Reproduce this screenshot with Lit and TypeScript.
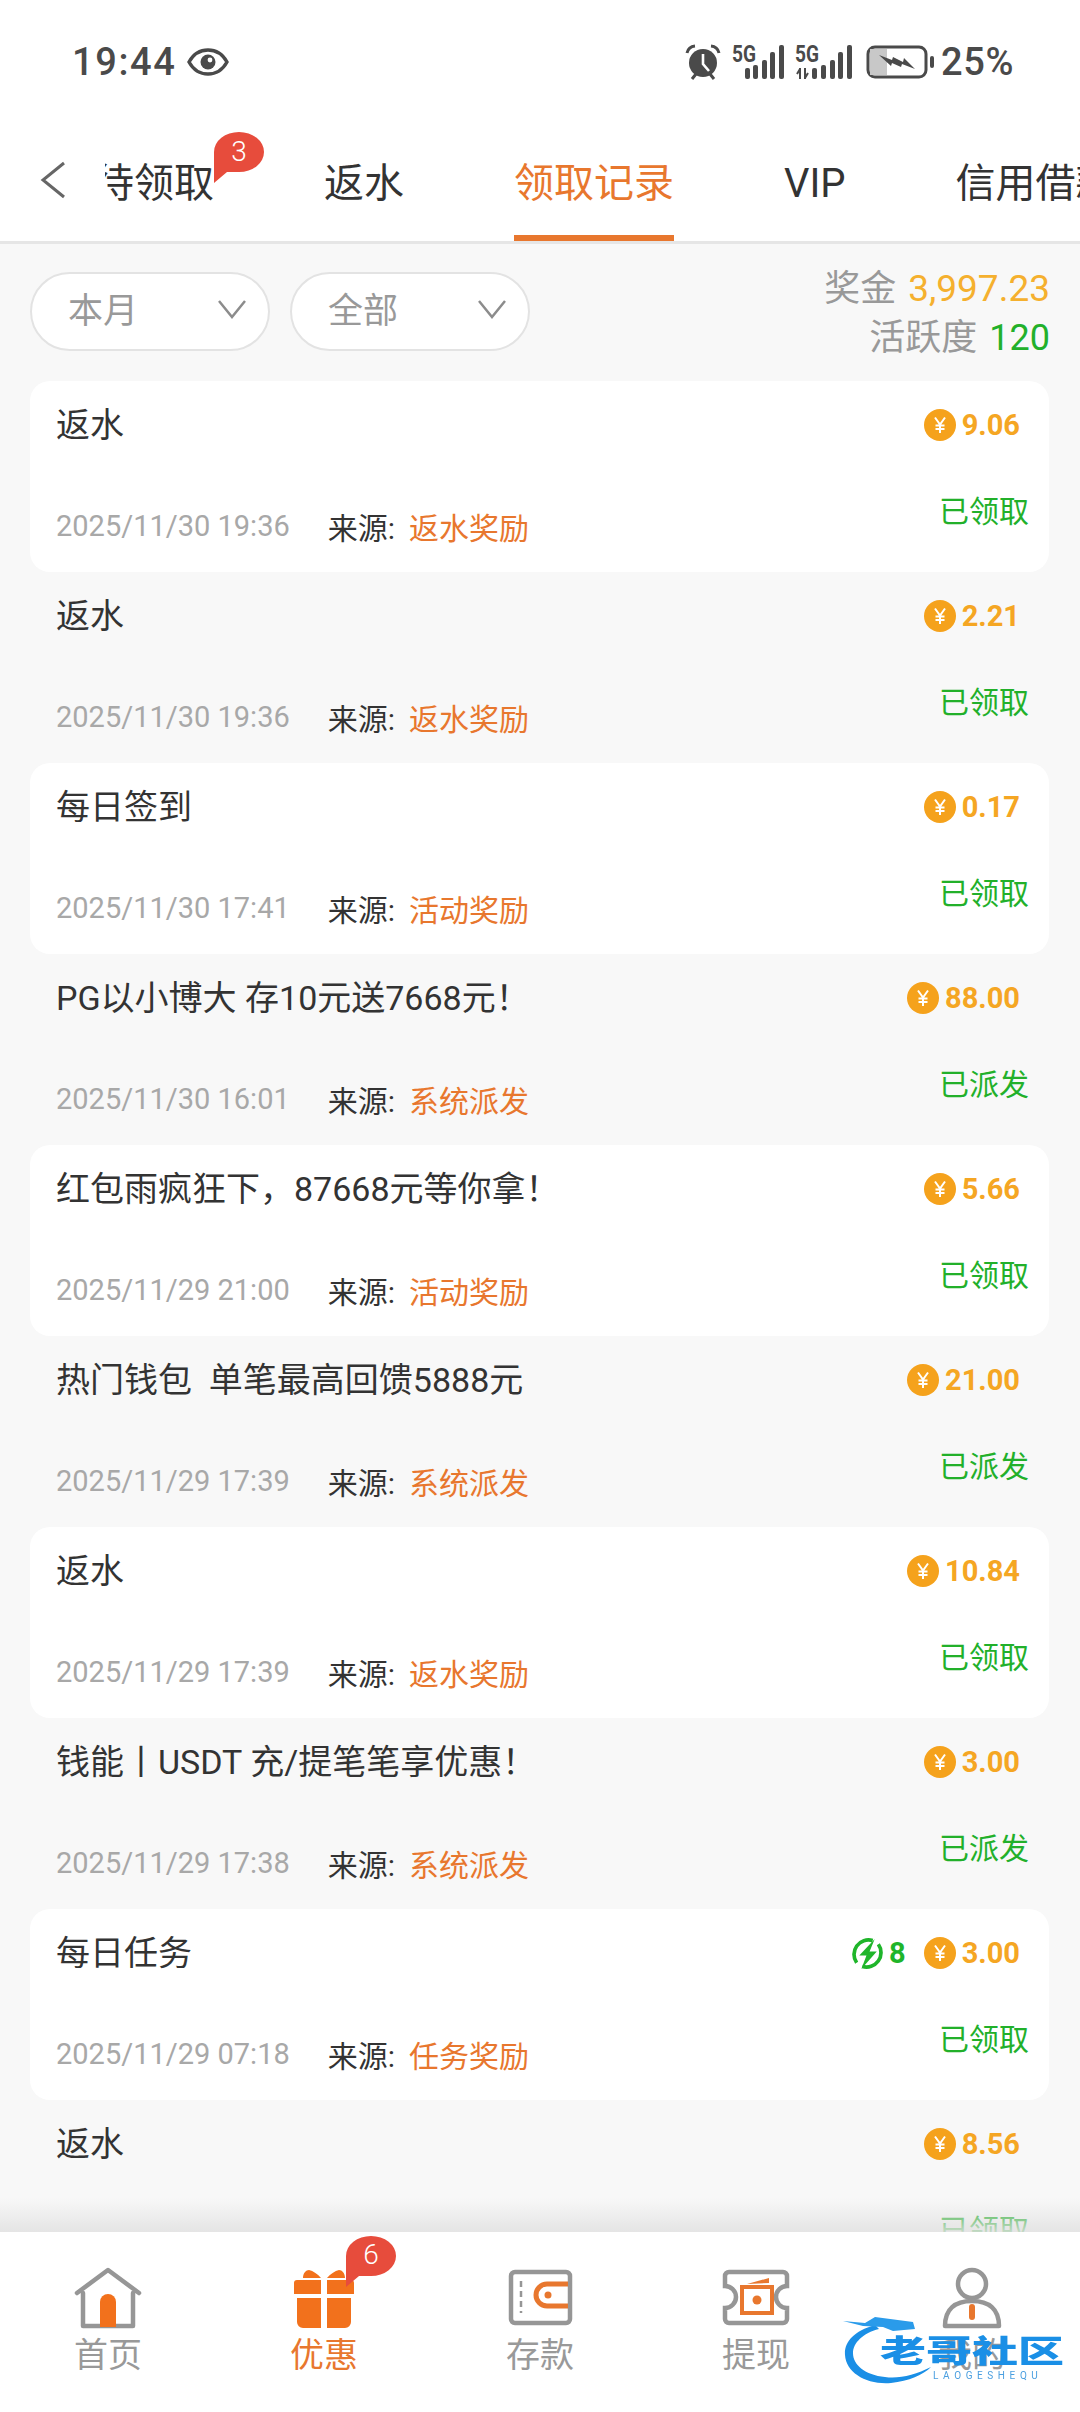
import { LitElement, html, css, svg } from 'lit';
import { customElement } from 'lit/decorators.js';

type Rec = {
  title: string;
  amount: string;
  time: string;
  source: string;
  status: string;
  energy?: string;
};

const records: Rec[] = [
  { title: '返水', amount: '9.06', time: '2025/11/30 19:36', source: '返水奖励', status: '已领取' },
  { title: '返水', amount: '2.21', time: '2025/11/30 19:36', source: '返水奖励', status: '已领取' },
  { title: '每日签到', amount: '0.17', time: '2025/11/30 17:41', source: '活动奖励', status: '已领取' },
  { title: 'PG以小博大 存10元送7668元！', amount: '88.00', time: '2025/11/30 16:01', source: '系统派发', status: '已派发' },
  { title: '红包雨疯狂下，87668元等你拿！', amount: '5.66', time: '2025/11/29 21:00', source: '活动奖励', status: '已领取' },
  { title: '热门钱包  单笔最高回馈5888元', amount: '21.00', time: '2025/11/29 17:39', source: '系统派发', status: '已派发' },
  { title: '返水', amount: '10.84', time: '2025/11/29 17:39', source: '返水奖励', status: '已领取' },
  { title: '钱能丨USDT 充/提笔笔享优惠！', amount: '3.00', time: '2025/11/29 17:38', source: '系统派发', status: '已派发' },
  { title: '每日任务', amount: '3.00', time: '2025/11/29 07:18', source: '任务奖励', status: '已领取', energy: '8' },
  { title: '返水', amount: '8.56', time: '2025/11/29 07:18', source: '返水奖励', status: '已领取' },
];

const tabs = ['待领取', '返水', '领取记录', 'VIP', '信用借款'];

const coin = html`<svg class="coin" viewBox="0 0 32 32">
  <circle cx="16" cy="16" r="16" fill="#f5a21c"></circle>
  <path d="M11 8.5l5 7 5-7M16 15.5V24M11.5 16.5h9M11.5 20h9" fill="none" stroke="#fff" stroke-width="2"></path>
</svg>`;

const bolt = html`<svg class="bolt" viewBox="0 0 32 32">
  <path d="M21 3.5A14 14 0 0 0 5.5 25M11 28.5A14 14 0 0 0 26.5 7" fill="none" stroke="#1fb52a" stroke-width="3.6"></path>
  <path d="M23 2L8 18h7l-5 13 15-17h-7z" fill="#1fb52a"></path>
</svg>`;

const bubble = (n: string) => html`<span class="bubble">
  <svg viewBox="0 0 50 54"><path d="M25 0a25 20 0 0 1 0 40H13L0 51V20A25 20 0 0 1 25 0z" fill="#e74c3c"></path></svg>
  <span>${n}</span>
</span>`;

const signal = (xs: number[], arrows: boolean) => svg`
  <text x="0" y="17" font-family="Roboto, sans-serif" font-size="24" font-weight="700" fill="#4a4a4a" textLength="24" lengthAdjust="spacingAndGlyphs">5G</text>
  ${arrows ? svg`<path d="M5 23v11M2 29l3-5M10 34V23M13 28l-3 5" stroke="#4a4a4a" stroke-width="2" fill="none"></path>` : null}
  ${[23, 20, 15, 7, 0].map(
    (y, i) => svg`<rect x="${xs[i]}" y="${y}" width="5" height="${34 - y}" rx="2" fill="#4a4a4a"></rect>`,
  )}
`;

@customElement('app-root')
export class AppRoot extends LitElement {
  static styles = css`
    :host {
      display: block;
      position: relative;
      width: 1080px;
      height: 2412px;
      overflow: hidden;
      background: #f8f8f8;
      font-family: Roboto, 'Noto Sans CJK SC', sans-serif;
    }

    .page {
      display: flex;
      flex-direction: column;
      height: 2412px;
    }

    .head {
      background: #fff;
      height: 244px;
      flex: none;
      border-bottom: 3px solid #e6e6e6;
      box-sizing: border-box;
    }

    .status {
      display: flex;
      align-items: center;
      height: 124px;
      padding: 0 66px 0 72px;
      color: #4a4a4a;
      font-size: 38px;
      font-weight: 500;
    }

    .status .clock {
      letter-spacing: 1.6px;
    }

    .status .pct {
      letter-spacing: 0.6px;
    }

    .status svg {
      display: block;
      flex: none;
    }

    .eye {
      width: 42px;
      height: 28px;
      margin-left: 11px;
    }

    .spacer {
      flex: 1;
    }

    .alarm {
      width: 36px;
      height: 36px;
    }

    .net {
      width: 54px;
      height: 34px;
      margin-left: 11px;
      overflow: visible;
    }

    .net.two {
      width: 57px;
      margin-left: 9px;
    }

    .batt {
      width: 68px;
      height: 34px;
      margin: 0 7px 0 14px;
    }

    .tabbar {
      display: flex;
      height: 117px;
      position: relative;
    }

    .back {
      width: 105px;
      flex: none;
      display: flex;
      align-items: center;
    }

    .back svg {
      width: 28px;
      height: 40px;
      margin: 0 0 5px 39px;
    }

    .tabs {
      flex: 1;
      display: flex;
      overflow: hidden;
    }

    .tabs .inner {
      display: flex;
      gap: 110px;
      margin-left: -11px;
      flex: none;
    }

    .tab {
      position: relative;
      font-size: 40px;
      line-height: 119px;
      height: 117px;
      color: #333;
      white-space: nowrap;
    }

    .tab.on {
      color: #e8772e;
    }

    .tab.on::after {
      content: '';
      position: absolute;
      left: 0;
      right: 0;
      bottom: 0;
      height: 6px;
      background: #e8772e;
    }

    .bubble {
      position: absolute;
      width: 50px;
      height: 54px;
      color: #fff;
      font-size: 28px;
      font-weight: 300;
      line-height: 40px;
      text-align: center;
    }

    .bubble svg {
      position: absolute;
      inset: 0;
      width: 100%;
      height: 100%;
    }

    .bubble span {
      position: relative;
    }

    .tabbar > .bubble {
      left: 214px;
      top: 8px;
    }

    .filters {
      display: flex;
      align-items: flex-start;
      height: 137px;
      flex: none;
      padding: 28px 30px 0 30px;
      box-sizing: border-box;
      gap: 20px;
    }

    .pill {
      width: 240px;
      height: 79px;
      box-sizing: border-box;
      border: 2px solid #e3e3e3;
      border-radius: 40px;
      background: #fff;
      display: flex;
      align-items: center;
      justify-content: space-between;
      padding: 0 21px 8px 36px;
      font-size: 35px;
      color: #999;
    }

    .pill svg {
      width: 30px;
      height: 22px;
      margin-top: 2px;
    }

    .totals {
      margin-left: auto;
      margin-top: -8px;
      text-align: right;
      font-size: 36px;
      line-height: 49px;
      color: #999;
    }

    .totals b {
      font-weight: 400;
      font-size: 37px;
      color: #f5b02e;
      margin-left: 12px;
    }

    .totals b.g {
      font-size: 36px;
      color: #22b02a;
    }

    .list {
      flex: 1;
      overflow: hidden;
      padding: 0 31px 0 30px;
    }

    .row {
      height: 191px;
      box-sizing: border-box;
      border-radius: 20px;
      padding: 0 20px 0 26px;
    }

    .row.odd {
      background: #fff;
    }

    .top {
      height: 88px;
      display: flex;
      align-items: center;
      justify-content: space-between;
      padding-right: 9px;
    }

    .title {
      font-size: 34px;
      padding-bottom: 6px;
      color: #333;
      white-space: pre;
    }

    .amt {
      display: flex;
      align-items: center;
      font-size: 29px;
      font-weight: 700;
      color: #f5a623;
    }

    .coin {
      width: 32px;
      height: 32px;
      margin-right: 6px;
    }

    .bolt {
      width: 33px;
      height: 33px;
      margin-right: 5px;
    }

    .en {
      color: #1fb52a;
      margin-right: 18px;
    }

    .bottom {
      display: flex;
      margin-top: 25px;
      justify-content: space-between;
    }

    .meta {
      display: flex;
      align-items: center;
      padding-top: 15px;
      height: 34px;
      font-size: 29px;
      color: #a8a8a8;
    }

    .src {
      margin-left: 38px;
      font-size: 30px;
      color: #333;
    }

    .src em {
      font-style: normal;
      color: #e8772e;
      margin-left: 14px;
    }

    .state {
      font-size: 30px;
      line-height: 36px;
      color: #22b02a;
    }

    .fade {
      position: absolute;
      left: 0;
      right: 0;
      bottom: 180px;
      height: 34px;
      background: linear-gradient(rgba(225, 225, 225, 0), rgba(225, 225, 225, 0.85));
    }

    .nav {
      flex: none;
      height: 180px;
      background: #fff;
      display: grid;
      grid-template-columns: repeat(5, 216px);
      position: relative;
    }

    .item {
      display: flex;
      flex-direction: column;
      align-items: center;
      position: relative;
      padding-top: 35px;
      font-size: 34px;
      color: #999;
      line-height: 40px;
    }

    .item.on {
      color: #e8772e;
    }

    .item svg.ico {
      width: 70px;
      height: 62px;
      margin-bottom: 6px;
    }

    .item > .bubble {
      left: 130px;
      top: 4px;
      line-height: 38px;
    }

    .mark {
      position: absolute;
      left: 843px;
      top: 2317px;
      width: 222px;
      height: 70px;
      filter: blur(0.6px);
    }

    .mark svg {
      position: absolute;
      left: 0;
      top: 0;
      width: 92px;
      height: 70px;
    }

    .mark .cn {
      position: absolute;
      left: 37px;
      top: 20px;
      font-size: 46px;
      line-height: 45px;
      font-weight: 900;
      color: #1a8fe6;
      white-space: nowrap;
      transform: scaleY(0.66);
      transform-origin: 0 0;
    }

    .mark .en2 {
      position: absolute;
      left: 90px;
      top: 53px;
      font-size: 10px;
      line-height: 12px;
      letter-spacing: 4.6px;
      color: #4a9fe0;
      white-space: nowrap;
    }
  `;

  private renderStatus() {
    return html`<div class="status">
      <span class="clock">19:44</span>
      <svg class="eye" viewBox="0 0 42 28">
        <path d="M2 14C7 5 14 2 21 2s14 3 19 12c-5 9-12 12-19 12S7 23 2 14z" fill="none" stroke="#4a4a4a" stroke-width="3.4"></path>
        <circle cx="21" cy="14" r="7.5" fill="#4a4a4a"></circle>
        <circle cx="23" cy="12" r="2.4" fill="#fff"></circle>
      </svg>
      <span class="spacer"></span>
      <svg class="alarm" viewBox="0 0 36 36">
        <circle cx="18" cy="19" r="14" fill="#4a4a4a"></circle>
        <path d="M18 10v10l6 7" fill="none" stroke="#fff" stroke-width="2.6"></path>
        <path d="M2 9a9 9 0 0 1 8-7M34 9a9 9 0 0 0-8-7" fill="none" stroke="#4a4a4a" stroke-width="3"></path>
        <path d="M7 35l4-5M29 35l-4-5" stroke="#4a4a4a" stroke-width="3"></path>
      </svg>
      <svg class="net" viewBox="0 0 54 34">${signal([13, 21, 30, 38, 47], false)}</svg>
      <svg class="net two" viewBox="0 0 57 34">${signal([17, 26, 35, 43, 52], true)}</svg>
      <svg class="batt" viewBox="0 0 68 34">
        <rect x="2" y="2" width="58" height="30" rx="7" fill="#fff" stroke="#4a4a4a" stroke-width="3"></rect>
        <path d="M4 4h17v26H4z" fill="#c8c8c8"></path>
        <path d="M13 10l13 5 1-3 10 5 1-4 11 11-13-5-1 3-9-4-1 3z" fill="#4a4a4a"></path>
        <rect x="64" y="11" width="4" height="12" rx="2" fill="#4a4a4a"></rect>
      </svg>
      <span class="pct">25%</span>
    </div>`;
  }

  private renderRow(r: Rec, i: number) {
    return html`<div class="row ${i % 2 === 0 ? 'odd' : ''}">
      <div class="top">
        <span class="title">${r.title}</span>
        <span class="amt">
          ${r.energy ? html`${bolt}<span class="en">${r.energy}</span>` : ''}
          ${coin}<span>${r.amount}</span>
        </span>
      </div>
      <div class="bottom">
        <div class="meta">
          <span>${r.time}</span>
          <span class="src">来源:<em>${r.source}</em></span>
        </div>
        <div class="state">${r.status}</div>
      </div>
    </div>`;
  }

  private renderNav() {
    return html`<div class="nav">
      <div class="item">
        <svg class="ico" viewBox="0 0 70 62">
          <path d="M10 26v33h50V26M4 26L35 3l31 23" fill="none" stroke="#969696" stroke-width="4.5" stroke-linecap="round" stroke-linejoin="round"></path>
          <path d="M27 60V35a8 8 0 0 1 16 0v25z" fill="#f2711c"></path>
        </svg>
        <span>首页</span>
      </div>
      <div class="item on">
        <svg class="ico" viewBox="0 0 70 62">
          <path d="M5 16a3 3 0 0 1 3-3h24v14H5zM38 13h24a3 3 0 0 1 3 3v11H38zM8 31h24v30H14a6 6 0 0 1-6-6zM38 31h24v24a6 6 0 0 1-6 6H38z" fill="#f2711c"></path>
          <path d="M14 11c0-5 3-8 6-8 4 1 9 4 12 8zM38 11c3-4 8-7 12-8 3 0 6 3 6 8z" fill="#f2711c"></path>
        </svg>
        <span>优惠</span>
        ${bubble('6')}
      </div>
      <div class="item">
        <svg class="ico" viewBox="0 0 70 62">
          <rect x="6" y="5" width="59" height="51" rx="4" fill="none" stroke="#969696" stroke-width="4.5"></rect>
          <path d="M16 14v32" stroke="#969696" stroke-width="2.5" stroke-dasharray="6 4"></path>
          <path d="M63 17H42a9 9 0 0 0 0 22h21" fill="none" stroke="#e8772e" stroke-width="5"></path>
          <circle cx="43" cy="28" r="3.5" fill="#e8772e"></circle>
        </svg>
        <span>存款</span>
      </div>
      <div class="item">
        <svg class="ico" viewBox="0 0 70 62">
          <path d="M8 5h54a4 4 0 0 1 4 4v10a11 11 0 0 0 0 22v11a4 4 0 0 1-4 4H8a4 4 0 0 1-4-4V41a11 11 0 0 0 0-22V9a4 4 0 0 1 4-4z" fill="none" stroke="#969696" stroke-width="4.5"></path>
          <path d="M21 20h30v26H21z" fill="none" stroke="#e8772e" stroke-width="4"></path>
          <path d="M26 17l22-6v5z" fill="#e8772e"></path>
          <circle cx="36" cy="33" r="4.5" fill="#e8772e"></circle>
        </svg>
        <span>提现</span>
      </div>
      <div class="item">
        <svg class="ico" viewBox="0 0 70 62">
          <circle cx="35" cy="17" r="14" fill="none" stroke="#969696" stroke-width="4.5"></circle>
          <path d="M8 59c0-17 10-25 27-25s27 8 27 25z" fill="none" stroke="#969696" stroke-width="4.5" stroke-linejoin="round"></path>
          <rect x="32" y="37" width="6" height="16" rx="3" fill="#e8772e"></rect>
        </svg>
        <span>我的</span>
      </div>
    </div>`;
  }

  render() {
    const chevron = html`<svg viewBox="0 0 30 22"><path d="M2 3l13 16L28 3" fill="none" stroke="#8c8c8c" stroke-width="2.5"></path></svg>`;
    return html`
      <div class="page">
        <div class="head">
          ${this.renderStatus()}
          <div class="tabbar">
            <div class="back">
              <svg viewBox="0 0 28 40"><path d="M25 3L4 20l21 17" fill="none" stroke="#666" stroke-width="3"></path></svg>
            </div>
            <div class="tabs">
              <div class="inner">
                ${tabs.map((t) => html`<div class="tab ${t === '领取记录' ? 'on' : ''}">${t}</div>`)}
              </div>
            </div>
            ${bubble('3')}
          </div>
        </div>
        <div class="filters">
          <div class="pill">本月${chevron}</div>
          <div class="pill">全部${chevron}</div>
          <div class="totals">
            <div>奖金<b>3,997.23</b></div>
            <div>活跃度<b class="g">120</b></div>
          </div>
        </div>
        <div class="list">${records.map((r, i) => this.renderRow(r, i))}</div>
        ${this.renderNav()}
      </div>
      <div class="fade"></div>
      <div class="mark">
        <svg viewBox="0 0 92 70">
          <path d="M32 8C10 14 1 26 2 38c1 18 22 30 46 28 18-2 32-8 40-16-16 8-32 12-46 10C22 58 10 48 10 36c0-10 10-20 26-24z" fill="#1a8fe6"></path>
          <path d="M0 4l22 2L32 0l38 5 2 7-22 2-10-4-20-1z" fill="#2a9bea"></path>
        </svg>
        <span class="cn">老哥社区</span>
        <span class="en2">LAOGESHEQU</span>
      </div>
    `;
  }
}

declare global {
  interface HTMLElementTagNameMap {
    'app-root': AppRoot;
  }
}
